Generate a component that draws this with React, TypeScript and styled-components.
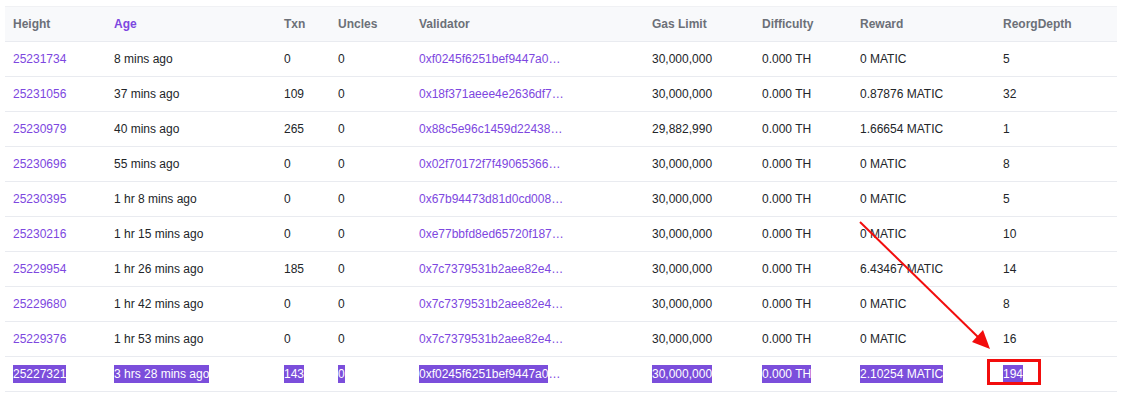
import * as React from 'react';
import styled, { createGlobalStyle } from 'styled-components';

const colors = {
  link: '#7d47e0',
  text: '#222529',
  head: '#6c7078',
  headBg: '#f8f9fb',
  line: '#e9ebf0',
  select: '#7b4edb',
  red: '#f20d0d',
};

type Block = {
  height: string;
  age: string;
  txn: string;
  uncles: string;
  validator: string;
  gasLimit: string;
  reward: string;
  depth: string;
};

const blocks: Block[] = [
  { height: '25231734', age: '8 mins ago', txn: '0', uncles: '0', validator: '0xf0245f6251bef9447a0', gasLimit: '30,000,000', reward: '0 MATIC', depth: '5' },
  { height: '25231056', age: '37 mins ago', txn: '109', uncles: '0', validator: '0x18f371aeee4e2636df7', gasLimit: '30,000,000', reward: '0.87876 MATIC', depth: '32' },
  { height: '25230979', age: '40 mins ago', txn: '265', uncles: '0', validator: '0x88c5e96c1459d22438', gasLimit: '29,882,990', reward: '1.66654 MATIC', depth: '1' },
  { height: '25230696', age: '55 mins ago', txn: '0', uncles: '0', validator: '0x02f70172f7f49065366', gasLimit: '30,000,000', reward: '0 MATIC', depth: '8' },
  { height: '25230395', age: '1 hr 8 mins ago', txn: '0', uncles: '0', validator: '0x67b94473d81d0cd008', gasLimit: '30,000,000', reward: '0 MATIC', depth: '5' },
  { height: '25230216', age: '1 hr 15 mins ago', txn: '0', uncles: '0', validator: '0xe77bbfd8ed65720f187', gasLimit: '30,000,000', reward: '0 MATIC', depth: '10' },
  { height: '25229954', age: '1 hr 26 mins ago', txn: '185', uncles: '0', validator: '0x7c7379531b2aee82e4', gasLimit: '30,000,000', reward: '6.43467 MATIC', depth: '14' },
  { height: '25229680', age: '1 hr 42 mins ago', txn: '0', uncles: '0', validator: '0x7c7379531b2aee82e4', gasLimit: '30,000,000', reward: '0 MATIC', depth: '8' },
  { height: '25229376', age: '1 hr 53 mins ago', txn: '0', uncles: '0', validator: '0x7c7379531b2aee82e4', gasLimit: '30,000,000', reward: '0 MATIC', depth: '16' },
  { height: '25227321', age: '3 hrs 28 mins ago', txn: '143', uncles: '0', validator: '0xf0245f6251bef9447a0', gasLimit: '30,000,000', reward: '2.10254 MATIC', depth: '194' },
];

const columns: { label: string; width: number; active?: boolean }[] = [
  { label: 'Height', width: 101 },
  { label: 'Age', width: 170, active: true },
  { label: 'Txn', width: 54 },
  { label: 'Uncles', width: 81 },
  { label: 'Validator', width: 233 },
  { label: 'Gas Limit', width: 110 },
  { label: 'Difficulty', width: 98 },
  { label: 'Reward', width: 143 },
  { label: 'ReorgDepth', width: 122 },
];

const GlobalStyle = createGlobalStyle`
  body {
    margin: 0;
    background: #ffffff;
    font-family: "Liberation Sans", Arial, sans-serif;
  }
`;

const Page = styled.div`
  position: relative;
  padding: 6px 7px 0 5px;
`;

const Table = styled.table`
  width: 1112px;
  border-collapse: collapse;
  table-layout: fixed;
  font-size: 12px;
  color: ${colors.text};
`;

const HeadCell = styled.th<{ $active?: boolean }>`
  height: 34px;
  padding: 0 8px;
  text-align: left;
  font-weight: bold;
  background: ${colors.headBg};
  color: ${({ $active }) => ($active ? colors.link : colors.head)};
  border-top: 1px solid #f0f1f4;
  border-bottom: 1px solid ${colors.line};
`;

const Cell = styled.td`
  height: 34px;
  padding: 0 8px;
  white-space: nowrap;
  overflow: hidden;
  border-bottom: 1px solid ${colors.line};
`;

const Link = styled.span`
  color: ${colors.link};
`;

const Selected = styled.span<{ $on: boolean }>`
  background: ${({ $on }) => ($on ? colors.select : 'transparent')};
  color: ${({ $on }) => ($on ? '#ffffff' : 'inherit')};
  padding: 2px 0;
`;

const Marker = styled.div`
  position: absolute;
  left: 987px;
  top: 359px;
  width: 48px;
  height: 20px;
  border: 3px solid ${colors.red};
`;

const Overlay = styled.svg`
  position: absolute;
  left: 0;
  top: 0;
  pointer-events: none;
`;

const Arrow = () => (
  <Overlay width={1124} height={393} viewBox="0 0 1124 393">
    <line x1={860} y1={222} x2={979} y2={338} stroke={colors.red} strokeWidth={2} />
    <polygon points="990,349 972,342 983,330" fill={colors.red} />
  </Overlay>
);

export default function App() {
  return (
    <Page>
      <GlobalStyle />
      <Table>
        <colgroup>
          {columns.map((c) => (
            <col key={c.label} style={{ width: c.width }} />
          ))}
        </colgroup>
        <thead>
          <tr>
            {columns.map((c) => (
              <HeadCell key={c.label} $active={c.active}>
                {c.label}
              </HeadCell>
            ))}
          </tr>
        </thead>
        <tbody>
          {blocks.map((b, i) => {
            const on = i === blocks.length - 1;
            return (
              <tr key={b.height}>
                <Cell>
                  {on ? <Selected $on>{b.height}</Selected> : <Link>{b.height}</Link>}
                </Cell>
                <Cell>
                  <Selected $on={on}>{b.age}</Selected>
                </Cell>
                <Cell>
                  <Selected $on={on}>{b.txn}</Selected>
                </Cell>
                <Cell>
                  <Selected $on={on}>{b.uncles}</Selected>
                </Cell>
                <Cell>
                  <Link>
                    <Selected $on={on}>{b.validator}</Selected>…
                  </Link>
                </Cell>
                <Cell>
                  <Selected $on={on}>{b.gasLimit}</Selected>
                </Cell>
                <Cell>
                  <Selected $on={on}>0.000 TH</Selected>
                </Cell>
                <Cell>
                  <Selected $on={on}>{b.reward}</Selected>
                </Cell>
                <Cell>
                  <Selected $on={on}>{b.depth}</Selected>
                </Cell>
              </tr>
            );
          })}
        </tbody>
      </Table>
      <Marker />
      <Arrow />
    </Page>
  );
}
